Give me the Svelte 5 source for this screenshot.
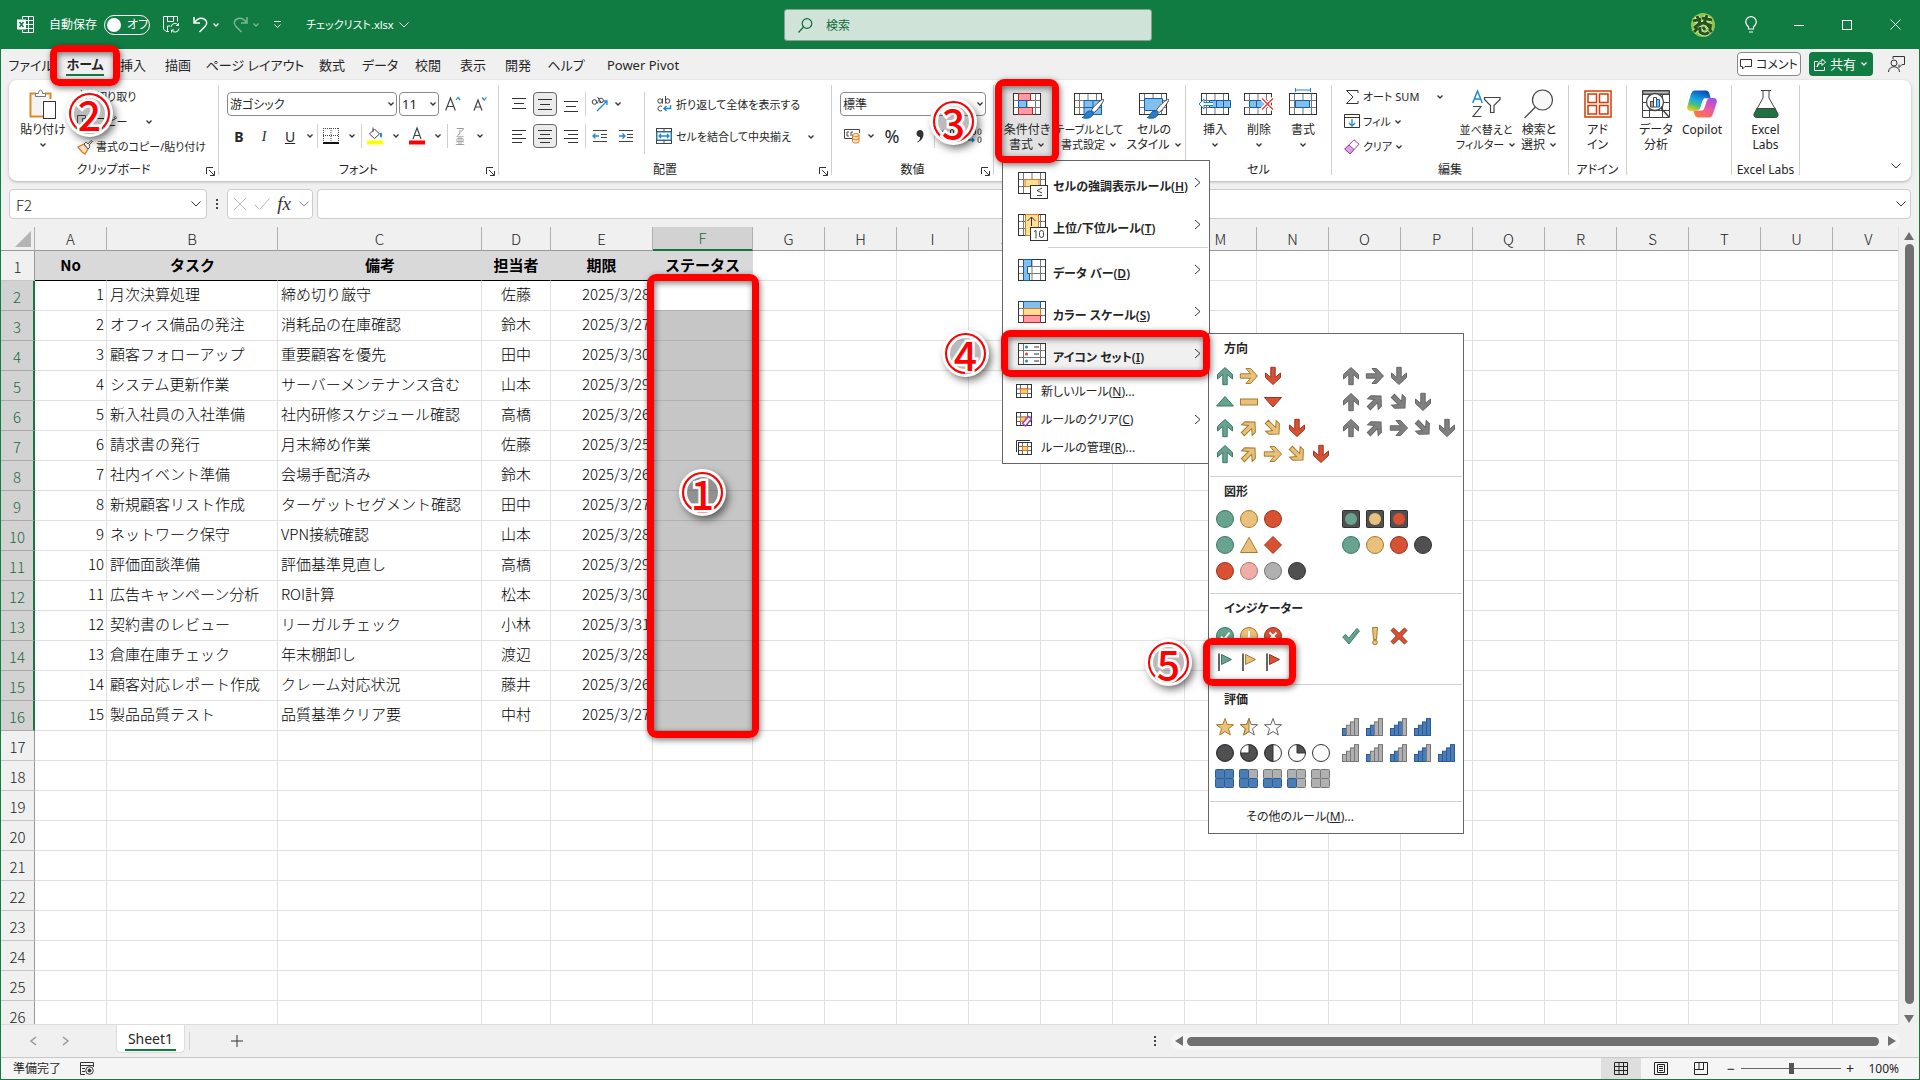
<script>
  const tabs = ['ファイル', 'ホーム', '挿入', '描画', 'ページ レイアウト', '数式', 'データ', '校閲', '表示', '開発', 'ヘルプ', 'Power Pivot'];
  const letters = 'ABCDEFGHIJKLMNOPQRSTUV'.split('');
  const rows = Array.from({ length: 26 }, (_, i) => i + 1);
  const tasks = [
    ['月次決算処理', '締め切り厳守', '佐藤', '2025/3/28'],
    ['オフィス備品の発注', '消耗品の在庫確認', '鈴木', '2025/3/27'],
    ['顧客フォローアップ', '重要顧客を優先', '田中', '2025/3/30'],
    ['システム更新作業', 'サーバーメンテナンス含む', '山本', '2025/3/29'],
    ['新入社員の入社準備', '社内研修スケジュール確認', '高橋', '2025/3/26'],
    ['請求書の発行', '月末締め作業', '佐藤', '2025/3/25'],
    ['社内イベント準備', '会場手配済み', '鈴木', '2025/3/26'],
    ['新規顧客リスト作成', 'ターゲットセグメント確認', '田中', '2025/3/27'],
    ['ネットワーク保守', 'VPN接続確認', '山本', '2025/3/28'],
    ['評価面談準備', '評価基準見直し', '高橋', '2025/3/29'],
    ['広告キャンペーン分析', 'ROI計算', '松本', '2025/3/30'],
    ['契約書のレビュー', 'リーガルチェック', '小林', '2025/3/31'],
    ['倉庫在庫チェック', '年末棚卸し', '渡辺', '2025/3/28'],
    ['顧客対応レポート作成', 'クレーム対応状況', '藤井', '2025/3/26'],
    ['製品品質テスト', '品質基準クリア要', '中村', '2025/3/27'],
  ];
  const heads = ['No', 'タスク', '備考', '担当者', '期限', 'ステータス'];

  function cell(row, col) {
    if (row === 1) return heads[col] ?? '';
    const task = tasks[row - 2];
    if (!task || col > 4) return '';
    return col === 0 ? String(row - 1) : task[col - 1];
  }

  // Each icon is "kind:colour"; the colour part is a CSS class.
  const sections = [
    {
      title: '方向',
      rows: [
        ['up:g right:y down:r', 'up:k right:k down:k'],
        ['triup:g bar:y tridown:r', 'up:k ne:k se:k down:k'],
        ['up:g ne:y se:y down:r', 'up:k ne:k right:k se:k down:k'],
        ['up:g ne:y right:y se:y down:r', ''],
      ],
    },
    {
      title: '図形',
      rows: [
        ['dot:g dot:y dot:r', 'lamp:g lamp:y lamp:r'],
        ['dot:g tri:y dia:r', 'dot:g dot:y dot:r dot:d'],
        ['dot:r dot:p dot:l dot:d', ''],
      ],
    },
    {
      title: 'インジケーター',
      rows: [
        ['okc:g exc:y noc:r', 'ok:g ex:y no:r'],
        ['flag:g flag:y flag:r', ''],
      ],
    },
    {
      title: '評価',
      rows: [
        ['star2:y star1:y star0:y', 'sig1:b sig2:b sig3:b sig4:b'],
        ['pie4:d pie3:d pie2:d pie1:d pie0:d', 'sig0:b sig1:b sig2:b sig3:b sig4:b'],
        ['box4:b box3:b box2:b box1:b box0:b', ''],
      ],
    },
  ];
  const turn = { up: 0, ne: 45, right: 90, se: 135, down: 180 };
  const star = 'M9 .5l2.200 6 6.300.2-5 4 1.800 6.300L9 13.500 3.700 17l1.800-6.300-5-4 6.300-.2z';
  const pies = ['', 'M9 9V1A8 8 0 0 1 17 9z', 'M9 1A8 8 0 0 0 9 17z', 'M9 9V1A8 8 0 1 1 1 9z', 'M9 1A8 8 0 1 1 8.990 1z'];
</script>

{#snippet chev()}
  <svg class="chev" width="8" height="8" viewBox="0 0 8 8"><path d="M1.500 2.500L4 5l2.500-2.500" /></svg>
{/snippet}

{#snippet wide()}
  <svg class="wide" width="12" height="8" viewBox="0 0 12 8"><path d="M1.500 1.500L6 6l4.500-4.500" /></svg>
{/snippet}

{#snippet launcher()}
  <button class="launcher" aria-label="詳細設定"><svg width="9" height="9" viewBox="0 0 9 9"><path d="M.5 7V.5H7M3 3l5 5M8.500 4v4.500H4" /></svg></button>
{/snippet}

{#snippet grid()}
  <rect x=".5" y="1.500" width="27" height="21" fill="#fff" stroke="#333" /><path d="M1 8.500h26M1 15.500h26M5.500 2v20M14 2v20M22.500 2v20" stroke="#777" fill="none" />
{/snippet}

{#snippet mark(n, cls)}
  <span class="mark {cls}"><b>{n}</b></span>
{/snippet}

{#snippet lines(d)}
  <svg width="16" height="16" viewBox="0 0 16 16"><path {d} stroke="#333" fill="none" /></svg>
{/snippet}

{#snippet icon(spec)}
  {@const kind = spec.split(':')[0]}
  {@const n = Number(kind.slice(-1))}
  <svg class="ic {spec.split(':')[1]}" width="20" height="20" viewBox="-1 -1 20 20">
    {#if kind in turn}
      <g transform="rotate({turn[kind]} 9 9)"><path d="M9 .5l7.500 7V12l-5.300-4.500v10.200H6.800V7.500L1.500 12V7.500z" /></g>
    {:else if kind === 'triup'}<path d="M9 3.500l8.500 9.500H.5z" />
    {:else if kind === 'bar'}<rect x=".5" y="6" width="17" height="6" />
    {:else if kind === 'tridown'}<path d="M9 14L.5 4.500h17z" />
    {:else if kind === 'dot'}<circle cx="9" cy="9" r="8.500" />
    {:else if kind === 'tri'}<path d="M9 1.500l8.500 15H.5z" />
    {:else if kind === 'dia'}<path d="M9 .5L17.500 9 9 17.500.5 9z" />
    {:else if kind === 'lamp'}<rect class="d" x=".5" y=".5" width="17" height="17" rx="1" /><circle class="plain" cx="9" cy="9" r="6" />
    {:else if kind === 'okc'}<circle cx="9" cy="9" r="8.500" /><path class="cut" d="M5 9.500l3 3 5.500-7" />
    {:else if kind === 'exc'}<circle cx="9" cy="9" r="8.500" /><path class="cut" d="M9 4v6.500M9 12.500v2" />
    {:else if kind === 'noc'}<circle cx="9" cy="9" r="8.500" /><path class="cut" d="M5.500 5.500l7 7M12.500 5.500l-7 7" />
    {:else if kind === 'ok'}<path d="M.7 10l2.800-2.600 3.300 3.800L14.800 1.500l2.700 2.400L7 17z" />
    {:else if kind === 'ex'}<path d="M6.500.5h5l-1 12h-3z" /><circle cx="9" cy="15.500" r="2.300" />
    {:else if kind === 'no'}<path d="M1 3.500L3.500 1 9 6.300 14.500 1 17 3.500 11.700 9l5.300 5.500-2.500 2.500L9 11.700 3.500 17 1 14.500 6.300 9z" />
    {:else if kind === 'flag'}<path d="M5.500 1.500l10 5-10 5z" /><path class="pole" d="M3 .5v17.500" />
    {:else if kind.startsWith('star')}
      <path class={n === 2 ? '' : 'empty'} d={star} />
      {#if n === 1}<path d="M9 .5v13L3.700 17l1.800-6.300-5-4 6.300-.2z" />{/if}
    {:else if kind.startsWith('pie')}<circle class="none" cx="9" cy="9" r="8.500" />{#if n}<path d={pies[n]} />{/if}
    {:else if kind.startsWith('sig')}
      {#each [0, 1, 2, 3] as i}<rect class={i < n ? 'b' : 'l'} x={0.5 + i * 4} y={10.5 - i * 3.3} width="4" height={7 + i * 3.3} />{/each}
    {:else if kind.startsWith('box')}
      {#each [[9, 0], [0, 0], [9, 9], [0, 9]] as [x, y], i}
        <rect class={(n === 4 || (n === 3 && i > 0) || (n === 2 && i > 1) || (n === 1 && i === 3)) ? 'b' : 'l'} x={x - 0.5} y={y - 0.5} width="9" height="9" rx="1" />
      {/each}
    {/if}
  </svg>
{/snippet}

{#snippet arrow()}
  <svg class="arrow" width="7" height="11" viewBox="0 0 7 11"><path d="M1 1l5 4.500L1 10" fill="none" stroke="#333" /></svg>
{/snippet}
{#snippet mini()}
  <rect x=".5" y=".5" width="15" height="13" fill="#fff" stroke="#333" /><path d="M1 5h14M1 9.500h14M4.500 1v12M11.500 1v12" stroke="#666" />
{/snippet}
{#snippet brush()}
  <path d="M29.500 7.500c1.500 1-8 13-9.500 13l-2.500-2c0-2 10.500-12.500 12-11z" fill="#fff" stroke="#444" /><path d="M8 25.500c3 0 3-6 7-6.500 3 0 5 2 3.500 4.500-2 3-7 3.500-10.500 2z" fill="#2b7cc4" stroke="#0f62b0" />
{/snippet}

<div class="app">
  <header class="title">
    <svg width="17" height="17" viewBox="0 0 17 17" fill="none" stroke="#fff"><path d="M5.500 3V.5h11v16h-11V14M5.500 4.500h11M8 8.500h8M8 12.500h8M11.500 1v15" /><rect x=".5" y="4" width="8" height="9" fill="#fff" /><path d="M2.500 6l4 5M6.500 6l-4 5" stroke="#107c41" stroke-width="1.500" /></svg>
    <label class="auto">自動保存<input type="checkbox" class="hide" /><span class="toggle"><i></i>オフ</span></label>
    <button class="save" aria-label="保存"><svg width="17" height="17" viewBox="0 0 17 17" fill="none" stroke="#fff"><path d="M6 15.500H3L.5 13V.5h14v5M4.500.5v5h6v-5M4.500 15v-5H7M8 11a4 4 0 0 1 7.500-1.500V7M15.500 9.500H13M16 12.500a4 4 0 0 1-7.500 1.500v2.500M8.500 14H11" /></svg></button>
    <button class="undo" aria-label="元に戻す"><svg width="15" height="17" viewBox="0 0 15 17" fill="none" stroke="#fff" stroke-width="1.500"><path d="M1 1v6h6M1.500 6.500C4 3 7 1.500 10 2.500c4 1.500 5 5 2 8L6.500 16" /></svg>{@render chev()}</button>
    <button class="undo redo" aria-label="やり直し"><svg width="15" height="17" viewBox="0 0 15 17" fill="none" stroke="#fff" stroke-width="1.500"><path d="M14 1v6H8M13.500 6.500C11 3 8 1.500 5 2.500c-4 1.500-5 5-2 8L8.500 16" /></svg>{@render chev()}</button>
    <button class="qat" aria-label="クイック アクセス"><svg width="9" height="8" viewBox="0 0 9 8" fill="none" stroke="#fff"><path d="M1 .5h7M1.500 3.500l3 3 3-3" /></svg></button>
    <button class="file">チェックリスト.xlsx {@render wide()}</button>
    <div class="search"><svg width="15" height="15" viewBox="0 0 15 15" fill="none" stroke="#0f6b38" stroke-width="1.200"><circle cx="9" cy="5.500" r="4.800" /><path d="M5.500 9L.5 14.500" /></svg><input aria-label="検索" placeholder="検索" /></div>
    <div class="win">
      <button aria-label="アカウント"><svg width="24" height="24" viewBox="0 0 24 24" fill="none"><circle cx="12" cy="12" r="12" fill="#8cc63f" /><path d="M2 8l8-2M6 3l3 7-6 5M11 5l10 2M16 2l-3 8 8 3M12 10l-8 4M14 9l6 7M3 19l4-4M9 14v5q5 4 9 0M12 14l2 3M18 16l3 3" stroke="#d9efc0" stroke-width="4.500" /><path d="M2 8l8-2M6 3l3 7-6 5M11 5l10 2M16 2l-3 8 8 3M12 10l-8 4M14 9l6 7M3 19l4-4M9 14v5q5 4 9 0M12 14l2 3M18 16l3 3" stroke="#24541c" stroke-width="3" /></svg></button>
      <button aria-label="ヒント"><svg width="12" height="17" viewBox="0 0 12 17" fill="none" stroke="#fff" stroke-width="1.200"><path d="M3.500 13v-2C2 9.500.7 8 .7 6a5.300 5.300 0 0 1 10.600 0c0 2-1.300 3.500-2.800 5v2zM4 16h4" /></svg></button>
      <button aria-label="最小化"><svg width="10" height="10" viewBox="0 0 10 10" stroke="#fff"><path d="M0 5.500h10" /></svg></button>
      <button aria-label="最大化"><svg width="10" height="10" viewBox="0 0 10 10" fill="none" stroke="#fff"><rect x=".5" y=".5" width="9" height="9" /></svg></button>
      <button aria-label="閉じる"><svg width="11" height="11" viewBox="0 0 11 11" stroke="#fff"><path d="M.5.5l10 10M10.500.5l-10 10" /></svg></button>
    </div>
  </header>

  <nav class="tabs">
    {#each tabs as t, i}
      <button class:active={i === 1}><span>{t}</span>
        {#if i === 1}<i class="frame home"></i>{@render mark(2, 'm2')}{/if}
      </button>
    {/each}
    <div class="actions">
      <button class="comment"><svg width="12" height="12" viewBox="0 0 12 12" fill="none" stroke="#333"><path d="M.5 1.500h11v7H5l-2.500 2.500V8.500h-2z" /></svg>コメント</button>
      <button class="share"><svg width="12" height="13" viewBox="0 0 12 13" fill="none" stroke="#fff"><path d="M4 3.500H.5v9h10V9M3 9q1-4 5-4V7.500L11.500 4 8 1v2Q4 3 3 9z" /></svg>共有 {@render chev()}</button>
      <button class="person" aria-label="連絡先"><svg width="17" height="17" viewBox="0 0 17 17" fill="none" stroke="#333"><path d="M5 3V.5h11.500v8H14l-3 3v-3" /><circle cx="6" cy="7" r="3" /><path d="M.5 16c0-7 11-7 11 0" /></svg></button>
    </div>
  </nav>

  <section class="ribbon">
    <div class="group clip">
      <div class="body">
        <button class="big"><svg width="28" height="30" viewBox="0 0 28 30" fill="none"><path d="M7 4.500H1.500v23H14M16 4.500h5.500V10" stroke="#d98a2b" stroke-width="2" /><path d="M3 6h17v4h-7v16H3z" fill="#f3f3f3" /><path d="M6.500 7.500V4.500h3c0-4.500 4-4.500 4 0h3v3z" fill="#fff" stroke="#777" /><rect x="14.500" y="12.500" width="12" height="17" fill="#fff" stroke="#333" /></svg><span>貼り付け</span>{@render chev()}</button>
        <div class="stack">
          <button><svg width="16" height="16" viewBox="0 0 16 16" fill="none" stroke="#555"><path d="M4 1l6 10M11 1L5 11" /><circle cx="4" cy="13" r="2" /><circle cx="11" cy="13" r="2" /></svg>切り取り</button>
          <button><svg width="16" height="16" viewBox="0 0 16 16" fill="#fff" stroke="#555"><path d="M.5 1.500h8v10h-8zM5.500 4.500h9v11h-9z" /></svg>コピー <em>{@render chev()}</em></button>
          <button><svg width="16" height="16" viewBox="0 0 16 16" fill="none"><path d="M1 8l6-3 4 5-3 5-3-2z" fill="#fbe0c0" stroke="#e07a1f" stroke-width="1.300" /><path d="M7 5l2-2 2 2 3-3.500 1.500 1L12 6l1 2-2 2z" fill="#fff" stroke="#555" /></svg>書式のコピー/貼り付け</button>
        </div>
      </div>
      <footer><span>クリップボード</span>{@render launcher()}</footer>
    </div>

    <div class="group font">
      <div class="body col">
        <div class="line">
          <span class="sel name"><select aria-label="フォント"><option>游ゴシック</option></select>{@render chev()}</span>
          <span class="sel size"><select aria-label="フォント サイズ"><option>11</option></select>{@render chev()}</span>
          <button class="w28" aria-label="拡大"><svg width="16" height="16" viewBox="0 0 16 16" fill="none" stroke="#444" stroke-width="1.200"><path d="M.7 14.500L5.500 2l4.800 12.500M2.200 10.500h6.600" /><path d="M11 4l2-2.500L15.200 4" stroke="#1e88d2" /></svg></button>
          <button class="w26" aria-label="縮小"><svg width="16" height="16" viewBox="0 0 16 16" fill="none" stroke="#444" stroke-width="1.200"><path d="M2 14.500L6 4l4 10.500M3.200 11h5.500" /><path d="M10 1.500L12.200 4l2-2.500" stroke="#1e88d2" /></svg></button>
        </div>
        <div class="line fmt">
          <button class="w24"><b>B</b></button><button class="w26"><i class="serif">I</i></button><button class="w26"><u>U</u></button><button class="w14" aria-label="下線">{@render chev()}</button><hr />
          <button class="w24" aria-label="罫線"><svg width="16" height="16" viewBox="0 0 16 16" fill="none" stroke="#444"><path d="M.5 0v14M8 0v14M15.500 0v14M0 .5h16M0 7.500h16" stroke-dasharray="1 1" /><path d="M0 15h16" stroke="#111" stroke-width="2" /></svg></button><button class="w18" aria-label="罫線の種類">{@render chev()}</button><hr />
          <button class="w24" aria-label="塗りつぶし"><svg width="16" height="18" viewBox="0 0 16 18" fill="none" stroke="#444"><path d="M2.500 7l5-5 5 5-5 4.500zM6 5V.5" /><path d="M13.500 6c1 2 1 3 0 4" stroke="#1e88d2" stroke-width="2" /><path d="M0 15.500h16" stroke="#ff0" stroke-width="4" /></svg></button><button class="w18" aria-label="塗りつぶしの色">{@render chev()}</button>
          <button class="w24" aria-label="フォントの色"><svg width="16" height="18" viewBox="0 0 16 18" fill="none" stroke="#444" stroke-width="1.200"><path d="M4 12L8 1l4 11M5.300 8.500h5.400" /><path d="M0 15.500h16" stroke="red" stroke-width="4" /></svg></button><button class="w18" aria-label="フォントの色の種類">{@render chev()}</button><hr />
          <button class="w22 ruby"><small>ア</small><small>亜</small></button><button class="w18" aria-label="ふりがな">{@render chev()}</button>
        </div>
      </div>
      <footer><span>フォント</span>{@render launcher()}</footer>
    </div>

    <div class="group align">
      <div class="body">
        <div class="col">
          <div class="line tight">
            <button aria-label="上揃え">{@render lines('M1 2.500h14M3 7.500h10M1 12.500h14')}</button>
            <button class="on" aria-label="上下中央揃え">{@render lines('M1 3.500h14M3 8.500h10M1 13.500h14')}</button>
            <button aria-label="下揃え">{@render lines('M1 5.500h14M3 10.500h10M1 15.500h14')}</button><hr />
            <button aria-label="方向"><svg width="18" height="16" viewBox="0 0 18 16" fill="none" stroke="#444"><circle cx="3.500" cy="6" r="2.300" /><path d="M5 4.500l2 3M6.500 1l4 6" /><circle cx="10" cy="4.500" r="2.300" /><path d="M6 15L16 5M12 5h4v4" stroke="#1e88d2" stroke-width="1.300" /></svg></button>
            <button class="w8" aria-label="方向の種類">{@render chev()}</button>
          </div>
          <div class="line tight">
            <button aria-label="左揃え">{@render lines('M1 2.500h14M1 6.500h10M1 10.500h14M1 14.500h10')}</button>
            <button class="on" aria-label="中央揃え">{@render lines('M1 2.500h14M3 6.500h10M1 10.500h14M3 14.500h10')}</button>
            <button aria-label="右揃え">{@render lines('M1 2.500h14M5 6.500h10M1 10.500h14M5 14.500h10')}</button><hr />
            <button aria-label="インデントを減らす"><svg width="16" height="14" viewBox="0 0 16 14" fill="none" stroke="#444"><path d="M1 1.500h14M9 5.500h6M9 8.500h6M1 12.500h14" /><path d="M7 7H1M3.500 4.500L1 7l2.500 2.500" stroke="#1e88d2" stroke-width="1.300" /></svg></button>
            <button aria-label="インデントを増やす"><svg width="16" height="14" viewBox="0 0 16 14" fill="none" stroke="#444"><path d="M1 1.500h14M9 5.500h6M9 8.500h6M1 12.500h14" /><path d="M1 7h6M4.500 4.500L7 7 4.500 9.500" stroke="#1e88d2" stroke-width="1.300" /></svg></button>
          </div>
        </div>
        <hr class="tall" />
        <div class="col wrap">
          <button><svg width="16" height="18" viewBox="0 0 16 18" fill="none" stroke="#444"><circle cx="4" cy="6" r="2.200" /><path d="M6.500 3.500v5M9.500 1v7.500" /><circle cx="11.700" cy="6" r="2.200" /><path d="M6 11.500a2.500 2.500 0 1 0 0 4" /><path d="M14.500 10v3.500H8M10.500 11L8 13.500l2.500 2.500" stroke="#1e88d2" stroke-width="1.500" /></svg>折り返して全体を表示する</button>
          <button><svg width="16" height="16" viewBox="0 0 16 16" fill="none" stroke="#444"><rect x=".5" y=".5" width="15" height="15" /><path d="M8 1v3M8 12v3M1 3.500h15M1 12.500h15" /><path d="M1 4h14v8H1z" fill="#fff" stroke="#1e88d2" /><path d="M3 8h10M5 6L3 8l2 2M11 6l2 2-2 2" stroke="#1e88d2" stroke-width="1.300" /></svg>セルを結合して中央揃え <em>{@render chev()}</em></button>
        </div>
      </div>
      <footer><span>配置</span>{@render launcher()}</footer>
    </div>

    <div class="group number">
      <div class="body col">
        <div class="line"><span class="sel std"><select aria-label="数値の書式"><option>標準</option></select>{@render chev()}</span></div>
        <div class="line">
          <button class="w24" aria-label="通貨"><svg width="17" height="16" viewBox="0 0 17 16" fill="none" stroke="#444"><path d="M8 10.500H.5v-9h15V5M5 4H3v4h2M7 8V4h2" /><path d="M8.500 7v6.500c0 2 6.500 2 6.500 0V7c0-2-6.500-2-6.500 0c0 2 6.500 2 6.500 0M8.500 10c0 2 6.500 2 6.500 0" fill="#fde3c4" stroke="#e07a1f" /></svg></button><button class="w14" aria-label="通貨の種類">{@render chev()}</button>
          <button class="w28"><span class="pct">%</span></button><button class="w28" aria-label="桁区切り"><svg width="8" height="14" viewBox="0 0 8 14"><path d="M1 13c3-2 3-3 3-5C2 8 .5 6.500.5 4.500S2 1 4 1s3.500 1.500 3.500 4C7.500 9 5 12 1.500 13.500z" fill="#333" /></svg></button><hr />
          <button class="w28" aria-label="小数点以下の表示桁数を増やす"><svg width="16" height="16" viewBox="0 0 16 16" fill="none" stroke="#444"><rect x="9.500" y="1.500" width="3" height="5" rx="1.500" /><path d="M7 3.500H1M3 1.500l-2 2 2 2" stroke="#1e88d2" /><rect x="5.500" y="9.500" width="3" height="5" rx="1.500" /><rect x="11.500" y="9.500" width="3" height="5" rx="1.500" /></svg></button><button class="w24" aria-label="小数点以下の表示桁数を減らす"><svg width="16" height="16" viewBox="0 0 16 16" fill="none" stroke="#444"><rect x="5.500" y="1" width="3" height="5.500" rx="1.500" /><rect x="11" y="1" width="3" height="5.500" rx="1.500" /><path d="M1 12h6M5 10l2 2-2 2" stroke="#1e88d2" stroke-width="1.300" /><rect x="11" y="9" width="3" height="5.500" rx="1.500" /></svg></button>
        </div>
      </div>
      <footer><span>数値</span>{@render launcher()}</footer>
    </div>

    <div class="group style">
      <div class="body">
        <button class="big on"><svg width="28" height="24" viewBox="0 0 28 24">{@render grid()}<g stroke="#c4262e" fill="#ff9aa2"><path d="M5.500 1.500h12v7h-12zM5.500 15.500h14v7h-14z" /></g><path d="M5.500 8.500h8v7h-8z" fill="#83beec" stroke="#0f62b0" /></svg><span>条件付き</span><span>書式 {@render chev()}</span></button>
        <button class="big"><svg width="31" height="24" viewBox="0 0 31 24">{@render grid()}<path d="M10 8.500h17.500v14H10z" fill="#83beec" stroke="#0f62b0" /><path d="M10 15.500h17M19 8v14" stroke="#0f62b0" />{@render brush()}</svg><span>テーブルとして</span><span>書式設定 {@render chev()}</span></button>
        <button class="big"><svg width="31" height="24" viewBox="0 0 31 24">{@render grid()}<path d="M5.500 6.500h18v12h-18z" fill="#83beec" stroke="#0f62b0" />{@render brush()}</svg><span>セルの</span><span>スタイル {@render chev()}</span></button>
      </div>

      <div class="menu">
        <button class="item"><svg width="30" height="28" viewBox="0 0 30 28">{@render grid()}<path d="M7 8.500h14v7H7z" fill="#ffdf94" stroke="#e07a1f" /><rect x="12.500" y="14.500" width="17" height="13" fill="#fff" stroke="#333" /><path d="M24 17l-5 2.500 5 2.500M19 24.500h5" fill="none" stroke="#444" /></svg><span>セルの強調表示ルール(<u>H</u>)</span>{@render arrow()}</button>
        <button class="item"><svg width="30" height="28" viewBox="0 0 30 28">{@render grid()}<path d="M7.500 1.500h13v21h-13z" fill="#ffdf94" stroke="#e07a1f" /><path d="M13.500 13V4M9.500 8l4-4 4 4" fill="none" stroke="#333" /><rect x="12.500" y="14.500" width="17" height="13" fill="#fff" stroke="#333" /><path d="M16 18.500l2-1v8" fill="none" stroke="#444" /><rect x="21.500" y="17.500" width="4" height="7" rx="2" fill="none" stroke="#444" /></svg><span>上位/下位ルール(<u>T</u>)</span>{@render arrow()}</button>
        <hr />
        <button class="item"><svg width="30" height="28" viewBox="0 0 30 28">{@render grid()}<path d="M5.500 1.500h8v7h-4v7h2v7h-6z" fill="#83beec" stroke="#0f62b0" /></svg><span>データ バー(<u>D</u>)</span>{@render arrow()}</button>
        <button class="item"><svg width="30" height="28" viewBox="0 0 30 28">{@render grid()}<path d="M5.500 1.500h17v7h-17z" fill="#83beec" stroke="#0f62b0" /><path d="M5.500 8.500h17v7h-17z" fill="#ffdf94" stroke="#e07a1f" /><path d="M5.500 15.500h17v7h-17z" fill="#ff9aa2" stroke="#c4262e" /></svg><span>カラー スケール(<u>S</u>)</span>{@render arrow()}</button>
        <div class="open">
          <button class="item hot"><svg width="30" height="28" viewBox="0 0 30 28"><rect x=".5" y="1.500" width="27" height="21" fill="#fff" stroke="#333" /><path d="M1 8.500h26M1 15.500h26M5.500 2v20M22.500 2v20" stroke="#777" /><path d="M16 5h5M16 12h5M16 19h5" stroke="#333" /><g fill="#1e88d2"><circle cx="8.500" cy="5" r="1.500" /><circle cx="8.500" cy="12" r="1.500" fill="#e33" /><circle cx="8.500" cy="19" r="1.500" /></g></svg><span>アイコン セット(<u>I</u>)</span>{@render arrow()}</button>
          <i class="frame f4"></i>{@render mark(4, 'm4')}
          <div class="sub">
            {#each sections as s, si}
              <div class="sec">
                <h3>{s.title}</h3>
                {#each s.rows as r, ri}
                  <div class="pair">
                    {#each r as set}
                      {#if set}<button aria-label="{s.title} {ri + 1}">{#each set.split(' ') as spec}{@render icon(spec)}{/each}</button>{/if}
                    {/each}
                    {#if si === 2 && ri === 1}<i class="frame f5"></i>{@render mark(5, 'm5')}{/if}
                  </div>
                {/each}
              </div>
            {/each}
            <button class="more">その他のルール(<u>M</u>)...</button>
          </div>
        </div>
        <button class="small"><svg width="16" height="15" viewBox="0 0 16 15">{@render mini()}<path d="M4.500 5h7v4.500h-7z" fill="#ffc878" stroke="#e07a1f" /></svg><span>新しいルール(<u>N</u>)...</span></button>
        <button class="small"><svg width="16" height="15" viewBox="0 0 16 15">{@render mini()}<path d="M4.500 5h5v4.500h-5z" fill="#ffc878" stroke="#e07a1f" /><path d="M6.500 11.500l6-7 3 2.500-6 7z" fill="#fff" stroke="#9b3fb0" stroke-width="1.300" /></svg><span>ルールのクリア(<u>C</u>)</span>{@render arrow()}</button>
        <button class="small"><svg width="16" height="15" viewBox="0 0 16 15"><path d="M.5 12V.5H14" fill="none" stroke="#333" /><rect x="2.500" y="2.500" width="13" height="12" fill="#fff" stroke="#333" /><path d="M3 6.500h12M3 10.500h12M6.500 3v11M11.500 3v11" stroke="#666" /><path d="M6.500 6.500h5v4h-5z" fill="#ffc878" stroke="#e07a1f" /></svg><span>ルールの管理(<u>R</u>)...</span></button>
      </div>
      <i class="frame f3"></i>{@render mark(3, 'm3')}
    </div>

    <div class="group cells">
      <div class="body">
        <button class="big"><svg width="32" height="24" viewBox="0 0 32 24"><g transform="translate(2 0)">{@render grid()}</g><path d="M10.500 8.500h21v7h-21z" fill="#83beec" stroke="#0f62b0" /><path d="M17.500 8v7M24.500 8v7" stroke="#0f62b0" /><path d="M14 10.500H5V7L0 12l5 5v-3.500h9" fill="#fff" stroke="#1e88d2" /></svg><span>挿入</span>{@render chev()}</button>
        <button class="big"><svg width="30" height="24" viewBox="0 0 30 24">{@render grid()}<path d="M0 9h5v6H0z" fill="#fff" /><path d="M5.500 8.500h14l3 3.500-3 3.500h-14zM12.500 8.500v7" fill="#83beec" stroke="#0f62b0" /><path d="M18 6.500l11 11M29 6.500l-11 11" stroke="#fff" stroke-width="4" /><path d="M18 6.500l11 11M29 6.500l-11 11" stroke="#e8423c" stroke-width="1.500" /></svg><span>削除</span>{@render chev()}</button>
        <button class="big"><svg width="28" height="24" viewBox="0 0 28 24">{@render grid()}<path d="M6.500 8.500h14v7h-14z" fill="#83beec" stroke="#0f62b0" /><path d="M6-2h16M6.500-4v4M21.500-4v4" stroke="#1e88d2" /></svg><span>書式</span>{@render chev()}</button>
      </div>
      <footer><span>セル</span></footer>
    </div>

    <div class="group edit">
      <div class="body">
        <div class="stack">
          <button><svg width="16" height="16" viewBox="0 0 16 16" fill="none" stroke="#333"><path d="M14 4V1.500H2.500L9 8l-6.500 6.500H14V12" /></svg>オート SUM <em>{@render chev()}</em></button>
          <button><svg width="16" height="15" viewBox="0 0 16 15" fill="none" stroke="#333"><path d="M.5.5h15v13H.5zM.5 3.500h15" /><path d="M8 5v7M5 9l3 3 3-3" stroke="#1e88d2" stroke-width="1.300" /></svg>フィル {@render chev()}</button>
          <button><svg width="16" height="16" viewBox="0 0 16 16" fill="#fff" stroke="#9b3fb0"><path d="M.8 10L10 .8l5 4.400L6 15z" /><path d="M.8 10L5 6l5 4.500L6 15z" fill="#d9a6e3" /></svg>クリア {@render chev()}</button>
        </div>
        <button class="big sort"><svg width="29" height="28" viewBox="0 0 29 28" fill="none" stroke-width="1.200"><path d="M.7 13L5.500 1l4.800 12M2.200 9h6.600" stroke="#1e88d2" stroke-width="1.500" /><path d="M1 16.500h8L1 26.500h8.500M12.500 7.500h15.500v2l-6 6v7h-3.500v-7l-6-6z" stroke="#444" /></svg><span>並べ替えと</span><span>フィルター {@render chev()}</span></button>
        <button class="big"><svg width="30" height="30" viewBox="0 0 30 30" fill="#f8f8f8" stroke="#444" stroke-width="1.200"><circle cx="18.500" cy="11" r="10" /><path d="M11.500 18L.5 29" /></svg><span>検索と</span><span>選択 {@render chev()}</span></button>
      </div>
      <footer><span>編集</span></footer>
    </div>

    <div class="group addin">
      <div class="body">
        <button class="big"><svg width="28" height="28" viewBox="0 0 28 28" fill="none" stroke="#d83b01" stroke-width="1.500"><path d="M1 1h26v26H1zM4 4h8.500v8.500H4zM15.500 4H24v8.500h-8.500zM4 15.500h8.500V24H4zM15.500 15.500H24V24h-8.500z" /></svg><span>アド</span><span>イン</span></button>
      </div>
      <footer><span>アドイン</span></footer>
    </div>

    <div class="group data">
      <div class="body">
        <button class="big"><svg width="28" height="28" viewBox="0 0 28 28" fill="none" stroke="#444"><path d="M1 1h26v3H1z" fill="#bbb" /><path d="M.5.5h27v27H.5zM0 4.500h28M0 12.500h28M0 20.500h28M7.500 4v23M20.500 4v23" /><circle cx="13" cy="12" r="8.500" fill="#fff" stroke-width="1.300" /><path d="M8.500 11.500h3V17h-3z" fill="#aaa" /><path d="M11.500 7.500h3V17h-3z" /><path d="M14.500 9.500h3V17h-3z" fill="#83beec" stroke="#0f62b0" /><path d="M19 18l8 9" stroke-width="1.500" /></svg><span>データ</span><span>分析</span></button>
        <button class="big"><svg width="30" height="28" viewBox="0 0 30 28"><defs><linearGradient id="ca" x1=".6" y1="0" x2=".2" y2="1"><stop offset="0" stop-color="#0b4fb8" /><stop offset=".45" stop-color="#18a5e8" /><stop offset=".7" stop-color="#4cc07a" /><stop offset="1" stop-color="#f4d211" /></linearGradient><linearGradient id="cb" x1=".8" y1="0" x2=".2" y2="1"><stop offset="0" stop-color="#a04df0" /><stop offset=".5" stop-color="#ee5a9a" /><stop offset="1" stop-color="#ff7a3c" /></linearGradient></defs><path d="M8 .5h11c2 0 3 1.500 3.700 4L23.500 8H19c-2 0-3 1-3.700 3.500l-1.500 5C12.500 20 11.500 21 9 21H4C1 21-.3 19 .3 16.500L4 4C5 1.500 6 .5 8 .5z" fill="url(#ca)" /><path d="M21.500 8H26c3 0 4.300 2 3.700 4.500L26 24c-.8 2.500-2 3.500-4 3.500H11.500C9 27.500 8 26 7.300 23.500L6.500 21H10c2.500 0 3.500-1 4.500-4.500l1.500-5C17 8.500 18.500 8 21.500 8z" fill="url(#cb)" /><path d="M18.500 8.500c-2 .5-2.600 1.500-3.200 3.500L13.800 17c-.6 2-1.300 3-2.500 3.600h2.700c2 0 3-1 3.700-3.600l2-6c.4-1.300 1-2 2.300-2.500z" fill="#fff" /></svg><span>Copilot</span></button>
      </div>
    </div>

    <div class="group labs">
      <div class="body">
        <button class="big"><svg width="26" height="28" viewBox="0 0 26 28" fill="none" stroke="#444"><path d="M3.500 18h19L25 24c.5 2-.5 3.500-2.500 3.500h-19C1.500 27.500.5 26 1 24z" fill="#1f7244" stroke="none" /><path d="M8 .5h10M10 .5V8L1 24c-.5 2 .5 3.500 2.500 3.500h19c2 0 3-1.500 2.500-3.500L16 8V.5M4 18.500h18" /></svg><span>Excel</span><span>Labs</span></button>
      </div>
      <footer><span>Excel Labs</span></footer>
    </div>
    <button class="fold" aria-label="リボンを折りたたむ">{@render wide()}</button>
  </section>

  <div class="formula">
    <div class="field namebox"><input aria-label="名前ボックス" value="F2" />{@render wide()}</div>
    <span class="dots"><i></i><i></i><i></i></span>
    <div class="field fx">
      <svg width="14" height="14" viewBox="0 0 14 14" stroke="#bbb"><path d="M1 1l12 12M13 1L1 13" /></svg>
      <svg width="16" height="12" viewBox="0 0 16 12" stroke="#bbb" fill="none"><path d="M.5 6.500l5 5 10-11" /></svg>
      <i>fx</i>{@render wide()}
    </div>
    <div class="field bar"><input aria-label="数式バー" />{@render wide()}</div>
  </div>

  <main class="sheetwrap">
    <div class="sheet">
      <table>
        <colgroup><col class="c0" /><col class="cA" /><col class="cB" /><col class="cC" /><col class="cD" /><col class="cE" /><col class="cF" />{#each letters.slice(6) as _}<col class="cG" />{/each}</colgroup>
        <thead><tr><th class="corner"><svg width="16" height="16" viewBox="0 0 16 16"><path d="M16 0v16H0z" fill="#b4b4b4" /></svg></th>{#each letters as l}<th scope="col" class:current={l === 'F'}>{l}</th>{/each}</tr></thead>
        <tbody>
          {#each rows as r}
            <tr class:head={r === 1} class:picked={r > 1 && r < 17}>
              <th scope="row">{r}</th>
              {#each letters as _, c}<td class="k{c < 6 ? c : 6}" class:cursor={r === 2 && c === 5}>{cell(r, c)}</td>{/each}
            </tr>
          {/each}
        </tbody>
      </table>
      <i class="frame f1"></i>{@render mark(1, 'm1')}
    </div>
    <div class="vbar"><svg width="10" height="8" viewBox="0 0 10 8"><path d="M5 0l5 8H0z" /></svg><i></i><svg width="10" height="8" viewBox="0 0 10 8"><path d="M5 8l5-8H0z" /></svg></div>
  </main>

  <div class="sheets">
    <button class="nav" aria-label="前のシート"><svg width="8" height="10" viewBox="0 0 8 10"><path d="M7 1L2 5l5 4" /></svg></button>
    <button class="nav" aria-label="次のシート"><svg width="8" height="10" viewBox="0 0 8 10"><path d="M1 1l5 4-5 4" /></svg></button>
    <button class="tab"><span>Sheet1</span></button><hr />
    <button class="plus" aria-label="新しいシート"><svg width="12" height="12" viewBox="0 0 12 12" stroke="#333"><path d="M0 6h12M6 0v12" /></svg></button>
    <span class="dots"><i></i><i></i><i></i></span>
    <div class="hbar"><svg width="8" height="10" viewBox="0 0 8 10"><path d="M0 5l8-5v10z" /></svg><i></i><svg width="8" height="10" viewBox="0 0 8 10"><path d="M8 5L0 0v10z" /></svg></div>
  </div>

  <footer class="status">
    <span>準備完了</span>
    <svg class="rec" width="15" height="13" viewBox="0 0 15 13" fill="none" stroke="#333"><path d="M5 12.500H.5V.5h13V5M.5 3.500h13M2 6.500h3M2 9.500h3" /><circle cx="9.500" cy="8.500" r="3.800" fill="#f5f5f5" /><circle cx="9.500" cy="8.500" r="1.500" fill="#333" /></svg>
    <div class="views">
      <button class="on" aria-label="標準"><svg width="14" height="13" viewBox="0 0 14 13"><path d="M.5.5h13v12H.5zM0 4.500h14M0 8.500h14M5 0v13M9.500 0v13" /></svg></button>
      <button aria-label="ページ レイアウト"><svg width="14" height="13" viewBox="0 0 14 13"><path d="M.5.5h13v12H.5zM3.500 2.500h7v8h-7zM5 4.500h4M5 6.500h4M5 8.500h4" /></svg></button>
      <button aria-label="改ページ プレビュー"><svg width="14" height="13" viewBox="0 0 14 13"><path d="M.5.5h13v12H.5zM5 0v7.500M9.500 0v7.500M0 7.500h10" /></svg></button>
    </div>
    <button class="zoom">−</button>
    <input type="range" aria-label="ズーム" min="0" max="100" value="50" />
    <button class="zoom">+</button>
    <span class="pc">100%</span>
  </footer>
</div>

<style>
  :global(body) { margin: 0; overflow: hidden; }
  .app { box-sizing: border-box; height: 100vh; display: flex; flex-direction: column; border: solid #107c41; border-width: 0 1px 1px; background: #f0f0f0; color: #262626; font: 12px/15px "Noto Sans", "Noto Sans CJK JP", sans-serif; font-feature-settings: "palt" 1; }
  .app :global(*) { box-sizing: border-box; }
  button, input, select { font: inherit; font-feature-settings: inherit; color: inherit; }
  button { border: 0; background: none; padding: 0; margin: 0; white-space: nowrap; display: flex; align-items: center; justify-content: center; }
  svg { flex: none; overflow: visible; }
  hr { border: 0; margin: 0; background: #d0d0d0; width: 1px; }
  em { font-style: normal; }
  input { border: 0; outline: 0; background: none; padding: 0; min-width: 0; }
  .chev, .wide { fill: none; stroke: #333; stroke-width: 1.300; }
  .wide { stroke-width: 1; }

  .title { height: 49px; flex: none; background: #107c41; color: #fff; display: flex; align-items: center; padding-left: 16px; position: relative; }
  .title .chev, .title .wide { stroke: #fff; }
  .auto { display: flex; align-items: center; gap: 7px; margin-left: 15px; }
  .hide { position: absolute; opacity: 0; }
  .toggle { width: 46px; height: 20px; border: 1px solid #fff; border-radius: 10px; display: flex; align-items: center; gap: 6px; padding-left: 2px; }
  .toggle i { width: 14px; height: 14px; border-radius: 7px; background: #fff; }
  .save { margin-left: 13px; }
  .undo { margin-left: 13px; gap: 4px; }
  .redo { opacity: .45; }
  .qat { margin-left: 13px; }
  .file { margin-left: 24px; gap: 4px; font-size: 11px; }
  .search { position: absolute; left: 783px; top: 9px; width: 368px; height: 32px; border: 1px solid #8a9f92; border-radius: 3px; background: #cfe3d8; display: flex; align-items: center; gap: 13px; padding-left: 13px; }
  .search input { flex: 1; }
  .search input::placeholder { color: #0f6b38; opacity: 1; }
  .win { margin-left: auto; display: flex; }
  .win button { width: 48px; height: 48px; }

  .tabs { height: 31px; flex: none; display: grid; grid-template-columns: 56px 52px 44px 46px 108px 46px 50px 46px 44px 46px 50px 104px 1fr; padding-left: 2px; font-size: 13px; position: relative; z-index: 3; }
  .tabs > button { position: relative; padding-top: 2px; }
  .active > span { font-weight: 700; border-bottom: 2px solid #107c41; padding: 2px 0; }
  .actions { display: flex; justify-content: flex-end; align-items: center; padding: 0 14px 1px 0; gap: 8px; }
  .comment, .share { height: 24px; border-radius: 4px; gap: 4px; width: 64px; }
  .comment { border: 1px solid #888; background: #fff; font-size: 12px; }
  .share { background: #107c41; color: #fff; }
  .share .chev { stroke: #fff; }
  .person { margin-left: 7px; }

  .ribbon { height: 101px; flex: none; margin: 0 8px; background: #fff; border-radius: 8px; box-shadow: 0 1px 3px #0004; display: flex; padding: 5px 0 6px; position: relative; z-index: 2; }
  .group { position: relative; border-right: 1px solid #d0d0d0; display: flex; flex-direction: column; flex: none; }
  .group > footer { height: 12px; display: flex; align-items: center; margin-top: auto; }
  .group > footer span { flex: 1; text-align: center; white-space: nowrap; }
  .launcher { width: 9px; margin: 4px 3px 0 -12px; }
  .launcher svg { fill: none; stroke: #333; }
  .clip { width: 210px; } .font { width: 280px; } .align { width: 333px; } .number { width: 162px; } .style { width: 192px; } .cells { width: 146px; } .edit { width: 237px; } .addin { width: 58px; } .data { width: 105px; } .labs { width: 68px; }
  .body { display: flex; height: 70px; }
  .col { display: flex; flex-direction: column; gap: 8px; padding-top: 7px; }
  .line { display: flex; height: 24px; align-items: stretch; }
  .big { display: grid; grid-template: 37px 15px 15px / 100%; justify-items: center; align-items: center; align-content: start; flex: none; }
  .big > span { display: flex; gap: 4px; align-items: center; }
  .clip .big { width: 68px; }
  .stack { display: flex; flex-direction: column; gap: 8px; padding-top: 3px; }
  .stack button { height: 18px; gap: 3px; justify-content: flex-start; }
  .stack, .wrap, .style .big:nth-child(2), .sort { font-size: 11px; }
  .clip .stack em { margin-left: 14px; }
  .font .col { padding-left: 8px; }
  .sel { display: grid; }
  .sel > :global(*) { grid-area: 1/1; }
  .sel select { appearance: none; border: 1px solid #8a8a8a; border-radius: 4px; background: #fff; padding: 0 2px; height: 24px; }
  .sel .chev { justify-self: end; align-self: center; margin-right: 2px; pointer-events: none; }
  .name { width: 170px; } .size { width: 40px; margin-left: 2px; font-size: 13px; } .std { width: 146px; }
  .w14 { width: 14px; } .w18 { width: 18px; } .w22 { width: 22px; } .w24 { width: 24px; } .w26 { width: 26px; } .w28 { width: 28px; }
  .fmt hr { margin-right: 1px; }
  .fmt b, .fmt u, .serif { font-size: 14px; }
  .serif { font-family: "Liberation Serif", serif; }
  .ruby { flex-direction: column; color: #888; }
  .ruby small { font-size: 9px; line-height: 9px; }
  .align .body > .col:first-child { padding-left: 8px; width: 145px; }
  .tight { gap: 2px; }
  .tight button { width: 24px; }
  .tight .w8 { width: 8px; }
  .tight .on { border: 1px solid #666; border-radius: 4px; background: #ebebeb; }
  .tall { height: 62px; margin-top: 7px; }
  .wrap { padding-left: 11px; }
  .wrap button { height: 24px; gap: 4px; justify-content: flex-start; }
  .wrap em { margin-left: 12px; }
  .number .col { padding-left: 8px; }
  .pct { font-size: 18px; }
  .style .body { padding-left: 8px; gap: 4px; }
  .style .big { width: 50px; }
  .style .big:nth-child(2) { width: 66px; }
  .style .big:nth-child(3) { width: 56px; }
  .style .big.on { background: #e2e2e2; height: 75px; }
  .cells .body { padding-left: 7px; }
  .cells .big { width: 44px; }
  .edit .body { padding-left: 12px; }
  .edit .stack { width: 114px; }
  .edit .stack em { margin-left: 14px; }
  .edit .big { width: 50px; }
  .edit .sort { width: 56px; }
  .addin .big, .labs .big { width: 100%; }
  .data .body { padding-left: 6px; }
  .data .big { width: 46px; }
  .fold { margin-left: auto; align-self: flex-end; padding: 5px 9px; }

  .frame { position: absolute; border: 7px solid #f00; border-radius: 9px; box-shadow: 1px 2px 6px #0008, inset 1px 2px 6px #0008; pointer-events: none; z-index: 4; }
  .mark { position: absolute; z-index: 5; width: 41px; height: 41px; border: 2px solid #f00; border-radius: 50%; box-shadow: 0 0 0 3px #fff, inset 0 0 0 3px #fff, 3px 4px 8px 2px #0009; background: #0004; display: flex; align-items: center; justify-content: center; }
  .mark b { font: 500 41px/37px "Noto Sans CJK JP", sans-serif; color: #f00; -webkit-text-stroke: 5px #fff; paint-order: stroke fill; }
  .home { left: -9px; top: -4px; width: 70px; height: 41px; }
  .m2 { left: 10px; top: 44px; }
  .f3 { left: 1px; top: -6px; width: 64px; height: 84px; }
  .m3 { left: -61px; top: 16px; }
  .f4 { left: -2px; top: -3px; width: 209px; height: 47px; }
  .m4 { left: -58px; top: 0; }
  .f5 { left: -7px; top: -11px; width: 93px; height: 48px; }
  .m5 { left: -62px; top: -7px; }
  .f1 { left: 646px; top: 47px; width: 112px; height: 464px; }
  .m1 { left: 681px; top: 245px; }

  .menu { position: absolute; left: 8px; top: 75px; width: 208px; background: #fff; border: 1px solid #666; padding: 1px 0; z-index: 3; }
  .menu > hr { width: auto; height: 1px; margin: 1px 1px 1px 45px; }
  .item, .small { width: 100%; justify-content: flex-start; text-align: left; }
  .item { height: 42px; padding: 0 8px 0 15px; gap: 5px; font-weight: 600; }
  .item > svg:first-child { margin-top: 3px; }
  .item span { padding-top: 6px; }
  .arrow { margin-left: auto; }
  .item .arrow { margin-top: -2px; }
  .hot { background: #f0f0f0; }
  .open { position: relative; margin-bottom: 3px; }
  .small { height: 28px; padding: 0 8px 2px 13px; gap: 9px; }
  .sub { position: absolute; left: 205px; top: 0; width: 256px; background: #fff; border: 1px solid #666; z-index: 2; }
  .sec { border-bottom: 1px solid #d0d0d0; padding-bottom: 9px; margin: 0 1px; }
  .sec h3 { margin: 0; font-size: 12px; font-weight: 600; line-height: 29px; padding-left: 14px; }
  .pair { position: relative; display: grid; grid-template-columns: 126px 126px; padding-left: 3px; height: 26px; }
  .pair button { justify-content: flex-start; gap: 4px; padding-left: 2px; }
  .more { padding: 7px 0 8px 37px; line-height: 16px; }
  .ic { stroke: #666; }
  .g { fill: #67a38e; stroke: #3b7a63; } .y { fill: #e9c07c; stroke: #a67c27; } .r { fill: #d75132; stroke: #9d3420; } .k { fill: #808080; stroke: #666; }
  .d { fill: #505050; stroke: #333; } .p { fill: #edafa5; stroke: #b5786e; } .l { fill: #b0b0b0; stroke: #777; } .b { fill: #4a7db5; stroke: #2c5a94; }
  .plain { stroke: none; }
  .cut { fill: none; stroke: #fff; stroke-width: 2; }
  .pole { fill: none; stroke: #666; stroke-width: 2; }
  .empty { fill: #fff; stroke: #666; }
  .none { fill: #fff; }

  .formula { display: flex; flex: none; padding: 8px; height: 46px; }
  .field { height: 30px; background: #fff; border: 1px solid #ccc; border-radius: 4px; display: flex; align-items: center; }
  .namebox { width: 198px; padding: 0 4px 0 6px; font-size: 15px; }
  .namebox input { flex: 1; font-weight: 300; font-family: "Noto Sans CJK JP", sans-serif; }
  .dots { width: 20px; display: flex; flex-direction: column; align-items: center; justify-content: center; gap: 2px; }
  .dots i { width: 2px; height: 2px; background: #444; }
  .fx { width: 86px; padding: 0 2px 0 5px; justify-content: space-between; }
  .fx i { font: italic 19px/20px "Liberation Serif", serif; color: #333; }
  .fx .wide { stroke: #888; }
  .bar { flex: 1; margin-left: 4px; padding-right: 3px; }
  .bar input { flex: 1; }

  .sheetwrap { flex: 1; min-height: 0; display: flex; }
  .sheet { position: relative; flex: 1; min-width: 0; overflow: hidden; border-right: 1px solid #e0e0e0; border-bottom: 1px solid #ddd; font-family: "Noto Sans CJK JP", sans-serif; font-size: 15px; font-weight: 300; font-feature-settings: normal; color: #000; }
  table { table-layout: fixed; border-collapse: separate; border-spacing: 0; width: 0; background: #fff; }
  .c0 { width: 34px; } .cA { width: 72px; } .cB { width: 171px; } .cC { width: 204px; } .cD { width: 69px; } .cE { width: 102px; } .cF { width: 100px; } .cG { width: 72px; }
  th, td { padding: 0; height: 30px; line-height: 20px; white-space: nowrap; overflow: hidden; }
  th { font-weight: 300; background: #f0f0f0; text-align: center; color: #222; }
  thead th { height: 24px; border-right: 1px solid #b0b0b0; border-bottom: 1px solid #999; }
  thead .current { background: #d2d2d2; color: #1b6b40; border-bottom: 2px solid #1b7343; }
  .corner { padding-right: 3px; }
  .corner svg { display: block; margin-left: auto; }
  tbody th { border-right: 1px solid #999; border-bottom: 1px solid #c6c6c6; padding-top: 3px; }
  td { border-right: 1px solid #e0e0e0; border-bottom: 1px solid #e0e0e0; padding: 0 2px 3px; }
  .k0 { text-align: right; } .k3 { text-align: center; } .k4 { text-align: right; }
  .k1, .k2 { padding-left: 3px; }
  .head td { font-weight: 700; text-align: center; padding-bottom: 1px; }
  .head td:not(.k6) { background: #d9d9d9; border-right-color: #d9d9d9; border-bottom-color: #000; }
  .picked th { background: #d2d2d2; color: #1b6b40; border-right: 2px solid #1b7343; border-bottom-color: #aaa; }
  .picked .k5 { background: #c6c6c6; border-bottom-color: #b0b0b0; }
  .picked .cursor { background: #fff; }
  .vbar { width: 20px; flex: none; display: flex; flex-direction: column; align-items: center; padding: 5px 0 2px; gap: 4px; }
  .vbar i { width: 9px; flex: 1; border-radius: 5px; background: #707070; margin-bottom: 7px; }
  .vbar svg, .hbar svg { fill: #707070; }

  .sheets { height: 32px; flex: none; display: flex; align-items: center; }
  .nav { width: 33px; }
  .nav:first-child { margin-left: 15px; }
  .nav svg { fill: none; stroke: #999; stroke-width: 1.500; }
  .tab { align-self: flex-start; height: 28px; width: 69px; margin-left: 34px; background: #fff; border: 1px solid #ddd; border-top: 0; border-radius: 0 0 5px 5px; font-size: 14px; }
  .tab span { border-bottom: 2px solid #107c41; padding: 3px 3px 2px; line-height: 17px; }
  .sheets hr { height: 18px; margin-left: 4px; }
  .plus { width: 94px; }
  .sheets .dots { margin-left: auto; margin-right: 6px; }
  .hbar { width: 38%; height: 17px; border-radius: 8px; background: #f5f5f5; display: flex; align-items: center; gap: 4px; padding: 0 4px; margin-right: 19px; }
  .hbar i { flex: 1; height: 9px; border-radius: 5px; background: #707070; margin-right: 5px; }

  .status { height: 22px; flex: none; background: #f5f5f5; border-top: 1px solid #c8c8c8; display: flex; align-items: center; padding: 0 20px 0 12px; }
  .rec { margin-left: 19px; }
  .views { margin-left: auto; display: flex; align-self: stretch; }
  .views button { width: 40px; }
  .views .on { background: #dedede; }
  .views svg { fill: none; stroke: #222; }
  .zoom { width: 16px; font-size: 14px; }
  .views + .zoom { margin-left: 2px; }
  input[type='range'] { appearance: none; width: 100px; margin: 0 1px 0 2px; height: 14px; background: linear-gradient(#666, #666) center / 100% 1px no-repeat; }
  input[type='range']::-webkit-slider-thumb { appearance: none; width: 5px; height: 11px; background: #555; }
  .pc { width: 34px; text-align: right; margin-left: 7px; }
</style>
